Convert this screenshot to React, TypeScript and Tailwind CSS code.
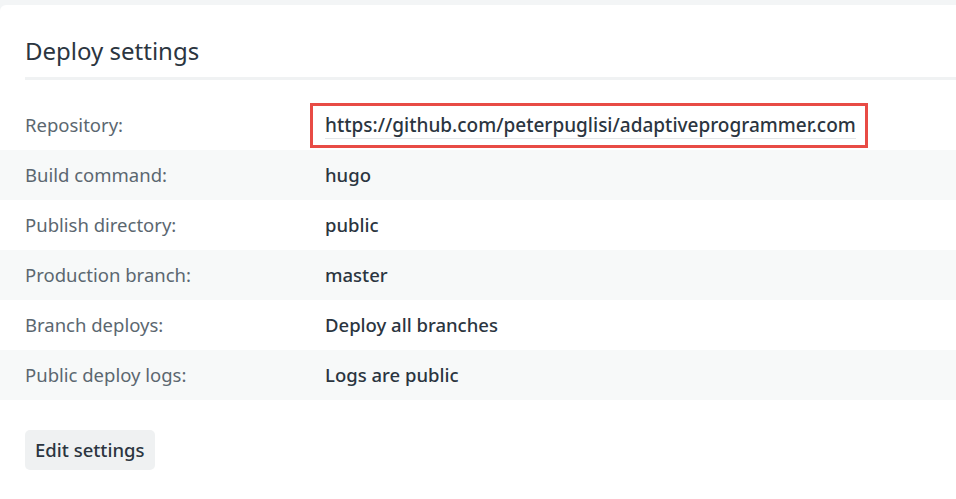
const rows: { label: string; value: string; highlight?: boolean }[] = [
  { label: "Repository:", value: "https://github.com/peterpuglisi/adaptiveprogrammer.com", highlight: true },
  { label: "Build command:", value: "hugo" },
  { label: "Publish directory:", value: "public" },
  { label: "Production branch:", value: "master" },
  { label: "Branch deploys:", value: "Deploy all branches" },
  { label: "Public deploy logs:", value: "Logs are public" },
];

export default function App() {
  return (
    <main className="h-[499px] w-[956px] overflow-hidden bg-[#f3f5f6] pt-[5px] font-['Noto_Sans',sans-serif]">
      <div className="h-full rounded-tl-md bg-white">
        <div className="px-[25px] pt-[30px]">
          <h2 className="text-[24px] leading-[32px] text-[#2b3540]">Deploy settings</h2>
          <div className="mt-[10px] -mr-[25px] h-[3px] bg-[#f0f2f3]" />
        </div>
        <div className="mt-[20px] flex flex-col">
          {rows.map((r, i) => (
            <div
              key={r.label}
              className={`flex h-[50px] items-center ${i % 2 === 1 ? "bg-[#f7f9f9]" : "bg-white"}`}
            >
              <div className="w-[325px] shrink-0 pl-[25px] text-[18.5px] text-[#5b6770]">{r.label}</div>
              {r.highlight ? (
                <div className="-ml-[15px] flex h-[45px] items-center border-[3px] border-[#e84b45] pr-[9px] pl-[12px]">
                  <span className="border-b border-[#e3e6e8] text-[19px] leading-[26px] font-medium whitespace-nowrap text-[#2b3540]">
                    {r.value}
                  </span>
                </div>
              ) : (
                <div className="text-[18.5px] font-medium text-[#2b3540]">{r.value}</div>
              )}
            </div>
          ))}
        </div>
        <div className="px-[25px] pt-[30px]">
          <button className="h-[40px] rounded-[5px] bg-[#eff1f2] px-[10px] text-[18.5px] font-medium text-[#2b3540]">
            Edit settings
          </button>
        </div>
      </div>
    </main>
  );
}
